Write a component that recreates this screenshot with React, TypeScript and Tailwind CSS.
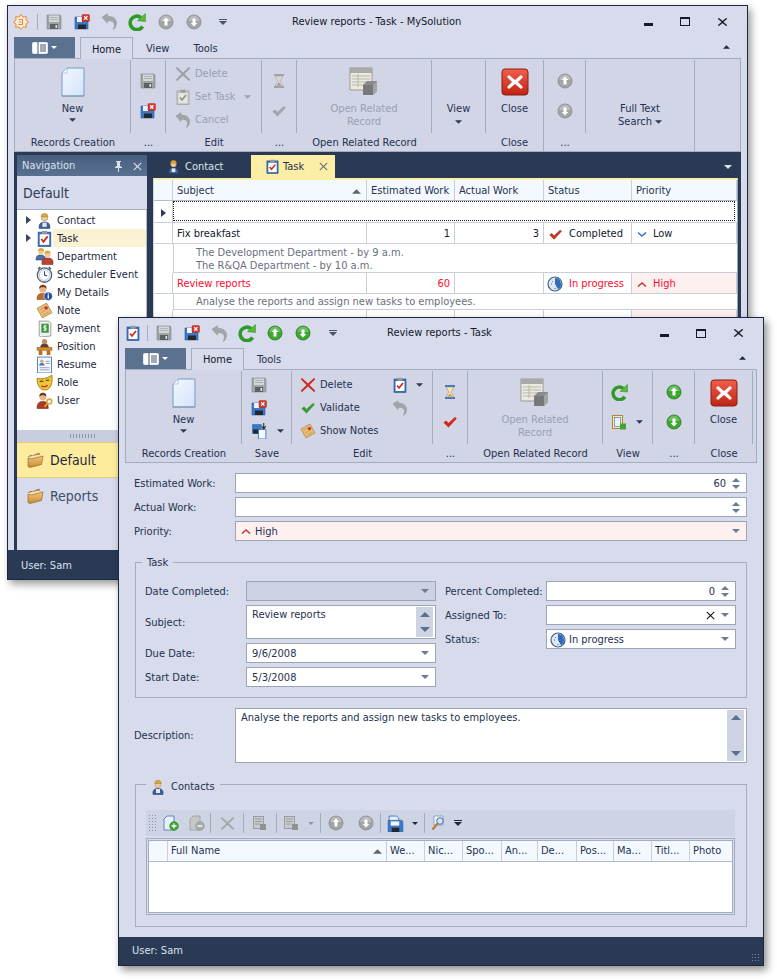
import React from "react";

type P = { s?: number };
const Svg = ({ s = 16, children }: { s?: number; children: React.ReactNode }) => (
  <svg width={s} height={s} viewBox="0 0 16 16" className="block shrink-0">{children}</svg>
);

const Floppy = ({ s = 16, blue = false }: P & { blue?: boolean }) => (
  <Svg s={s}>
    <path d="M1 1h13l1 1v13H1z" fill={blue ? "#3b78c9" : "#9ea3a8"} stroke={blue ? "#2a5c9e" : "#85898e"} strokeWidth=".6" />
    <rect x="3" y="1.500" width="10" height="6.500" fill={blue ? "#f3f6fb" : "#d4d6d8"} />
    <path d="M4 3.500h8M4 5.500h8" stroke={blue ? "#9bb6d9" : "#a8abae"} strokeWidth=".8" />
    <rect x="4" y="10" width="8" height="5" fill={blue ? "#23282f" : "#5d6065"} />
    <rect x="9.500" y="11" width="1.600" height="3" fill="#e5e5e5" />
  </Svg>
);
const FloppyX = ({ s = 16 }: P) => (
  <Svg s={s}>
    <path d="M1 3h11l2 1v11H1z" fill="#3b78c9" stroke="#2a5c9e" strokeWidth=".6" />
    <rect x="3" y="3" width="5" height="5" fill="#eef3fa" />
    <rect x="4" y="10.500" width="8" height="4.500" fill="#23282f" />
    <rect x="8" y="0.500" width="7.500" height="7" rx="1" fill="#d8352a" stroke="#a32018" strokeWidth=".4" />
    <path d="M10.200 2.200l3.200 3.400M13.400 2.200l-3.200 3.400" stroke="#fff" strokeWidth="1.300" />
  </Svg>
);
const Undo = ({ s = 17 }: P) => (
  <Svg s={s}>
    <path d="M1 4L6 .8v2.400c4.500-.2 8.500 1.600 8.500 6.300 0 2.800-1.300 5.200-3 6 1-1.800 1.300-3.600 1-5.200C12 8 9.300 7 6 7.200v2.300z" fill="#a3a5a8" stroke="#8a8c8f" strokeWidth=".5" />
  </Svg>
);
const Refresh = ({ s = 18 }: P) => (
  <Svg s={s}>
    <path d="M13 12a6 6 0 1 1-1.500-8" fill="none" stroke="#2f9a2a" strokeWidth="3.200" />
    <path d="M8.500 6.800L15.500 7.500V.5z" fill="#57bd38" stroke="#2b8b27" strokeWidth=".5" />
  </Svg>
);
const Round = ({ s = 16, up = true, green = false }: P & { up?: boolean; green?: boolean }) => (
  <Svg s={s}>
    <circle cx="8" cy="8" r="7" fill={green ? "#3da82e" : "#a2a5a6"} stroke={green ? "#22761e" : "#85888a"} strokeWidth=".8" />
    <path d="M2.500 7a5.500 5.500 0 0 1 11 0z" fill="#fff" opacity=".25" />
    <path d={up ? "M8 3.500l3.300 3.500H9.500v4.500h-3V7H4.700z" : "M8 12.500L4.700 9H6.500V4.500h3V9h1.800z"} fill="#fff" />
  </Svg>
);
const Caret = ({ c = "#2c3a55", w = 7 }: { c?: string; w?: number }) => (
  <svg width={w} height={Math.ceil(w / 2)} viewBox="0 0 8 4" className="block shrink-0"><path d="M0 0h8L4 4z" fill={c} /></svg>
);
const CaretUp = ({ c = "#2c3a55", w = 7 }: { c?: string; w?: number }) => (
  <svg width={w} height={Math.ceil(w / 2)} viewBox="0 0 8 4" className="block shrink-0"><path d="M0 4h8L4 0z" fill={c} /></svg>
);
const QuickCaret = ({ c = "#4a5568" }: { c?: string }) => (
  <svg width="8" height="6" viewBox="0 0 8 6" className="block"><path d="M0 0h8v1H0z M0 2h8L4 6z" fill={c} /></svg>
);
const NewPage = () => (
  <svg width="28" height="32" viewBox="0 0 28 32" className="block">
    <path d="M8 2h17v28H3V7z" fill="url(#pg)" stroke="#6e9bd1" strokeWidth="1" />
    <path d="M8 2v5H3z" fill="#fff" stroke="#8db0da" strokeWidth=".7" />
    <path d="M3 30h22" stroke="#8796aa" strokeWidth="1" />
    <defs><linearGradient id="pg" x1="0" y1="0" x2="1" y2="1"><stop offset="0" stopColor="#f4f8ff" /><stop offset="1" stopColor="#d3e3fa" /></linearGradient></defs>
  </svg>
);
const BigClose = () => (
  <svg width="28" height="28" viewBox="0 0 28 28" className="block">
    <rect x="1" y="1" width="26" height="26" rx="3" fill="url(#rx)" stroke="#8d1d12" />
    <path d="M8 7l6 5 6-5 2 2-5 5 5 5-2 2-6-5-6 5-2-2 5-5-5-5z" fill="#fff" />
    <defs><linearGradient id="rx" x1="0" y1="0" x2="0" y2="1"><stop offset="0" stopColor="#f0604c" /><stop offset="1" stopColor="#bf2413" /></linearGradient></defs>
  </svg>
);
const RelatedRecord = () => (
  <svg width="30" height="30" viewBox="0 0 30 30" className="block">
    <rect x="1" y="1" width="22" height="22" fill="#eceadf" stroke="#9a9a96" />
    <rect x="1" y="1" width="22" height="5" fill="#a9aaa8" />
    <path d="M3 9h18M3 12h18M3 15h18M3 18h12M9 7v13" stroke="#b8b7ac" strokeWidth="1" />
    <path d="M14 18l4-4h10v10l-4 4H14z" fill="#8a8b8c" />
    <path d="M14 18h10v10H14z" fill="#77787a" />
    <path d="M24 18l4-4v10l-4 4z" fill="#a3a4a5" />
  </svg>
);
const Hourglass = ({ color = false }: { color?: boolean }) => (
  <Svg>
    <path d="M3 1h10v2H3zM3 13h10v2H3z" fill={color ? "#3d7cc4" : "#a1a3a5"} />
    <path d="M4.500 3h7c0 3-2.500 3.800-2.500 5s2.500 2 2.500 5h-7c0-3 2.500-3.800 2.500-5S4.500 6 4.500 3z" fill={color ? "#f4e6c3" : "#d9d8d3"} stroke={color ? "#a88a55" : "#a1a3a5"} strokeWidth=".6" />
    <path d="M5.500 12.500L8 9.500l2.500 3z" fill={color ? "#d49a3a" : "#9a9a96"} />
  </Svg>
);
const Check = ({ c = "#a3a5a8", s = 16 }: P & { c?: string }) => (
  <Svg s={s}>
    <path d="M1.500 8.500L4 6.500l2.500 2.500L13 3l1.800 1.500L6.500 13.500z" fill={c} />
  </Svg>
);
const BigX = ({ c = "#9ca0a4", s = 16 }: P & { c?: string }) => (
  <Svg s={s}>
    <path d="M2 1l6 5.500L14 1l1.300 1.300L9.500 8l5.800 5.700L14 15 8 9.500 2 15 .7 13.700 6.500 8 .7 2.300z" fill={c} />
  </Svg>
);
const Clipboard = ({ s = 16, gray = false }: P & { gray?: boolean }) => (
  <Svg s={s}>
    <rect x="2" y="2" width="12" height="13.500" fill={gray ? "#c8c9c5" : "#3a6fb5"} stroke={gray ? "#8f9193" : "#29538c"} strokeWidth=".6" />
    <rect x="3.500" y="4" width="9" height="10" fill={gray ? "#e6e6e0" : "#fff"} />
    <rect x="5.500" y=".8" width="5" height="3" fill={gray ? "#9a9c9e" : "#8e9bab"} />
    <path d="M5 8.500l2 2.500 4-5" fill="none" stroke={gray ? "#8f9193" : "#d22a1e"} strokeWidth="1.700" />
  </Svg>
);
const Person = ({ s = 16, body = "#3a5f9a", hat = "#d9a93a" }: P & { body?: string; hat?: string }) => (
  <Svg s={s}>
    <path d="M3 15.500c-.6-4 1.200-6 5-6s5.600 2 5 6z" fill={body} stroke="#22395f" strokeWidth=".5" />
    <rect x="6" y="10" width="4" height="4" fill="#dfe7f2" />
    <circle cx="8" cy="5.500" r="3" fill="#f0c9a0" stroke="#9c7348" strokeWidth=".4" />
    <path d="M4.800 4.500a3.200 3.200 0 0 1 6.400 0z" fill={hat} stroke="#8c6b1e" strokeWidth=".4" />
  </Svg>
);
const Department = () => (
  <svg width="20" height="18" viewBox="0 0 20 18" className="block shrink-0">
    <path d="M1 13c0-4 1.500-5 4.500-5s5 1 5 5z" fill="#4c6ea6" stroke="#22395f" strokeWidth=".5" />
    <circle cx="6" cy="5" r="2.800" fill="#f0c9a0" /><path d="M3 4a3 3 0 0 1 6 0z" fill="#d9a93a" />
    <path d="M7 17.500c-.5-5 1-6.500 5.500-6.500s6 1.500 5.500 6.500z" fill="#b8452f" stroke="#6e2417" strokeWidth=".5" />
    <circle cx="12.500" cy="7.500" r="3" fill="#f0c9a0" /><path d="M9.500 6.500a3 3 0 0 1 6 0z" fill="#d9a93a" />
  </svg>
);
const Clock = () => (
  <Svg s={17}>
    <circle cx="8" cy="8.500" r="6.800" fill="#dfe8f2" stroke="#55606e" strokeWidth="1.200" />
    <circle cx="8" cy="8.500" r="4.800" fill="#fff" stroke="#9fb0c6" strokeWidth=".5" />
    <path d="M8 5v3.500l2.500 1" fill="none" stroke="#2c4c85" strokeWidth="1" />
    <path d="M2 3l2-2M14 3l-2-2" stroke="#55606e" strokeWidth="1.500" />
  </Svg>
);
const MyDetails = () => (
  <Svg s={17}>
    <path d="M1 14.500c0-4 1.500-5.500 5-5.500s5 1.500 5 5.500z" fill="#c06a28" stroke="#6d3a12" strokeWidth=".5" />
    <circle cx="6.500" cy="5" r="3.300" fill="#e8b58a" />
    <path d="M3 4.500C3 1.500 5 .8 6.500 .8S10 1.500 10 4.500L8 3H5z" fill="#7a3e1c" />
    <circle cx="11.500" cy="11.500" r="4" fill="#1f4fa5" stroke="#fff" strokeWidth=".6" />
    <rect x="10.900" y="10.500" width="1.300" height="3.300" fill="#fff" /><rect x="10.900" y="8.700" width="1.300" height="1.200" fill="#fff" />
  </Svg>
);
const Note = ({ s = 16 }: P) => (
  <Svg s={s}>
    <path d="M1 6l9-5 5 9-9 5z" fill="#e6bd7a" stroke="#a97f3c" strokeWidth=".7" />
    <path d="M3.500 7.500l6-3.300M5 10l6-3.300M6.500 12.500l6-3.300" stroke="#bf9451" strokeWidth=".7" />
    <circle cx="9.500" cy="5.500" r="1.600" fill="#d22a1e" />
  </Svg>
);
const Payment = () => (
  <Svg s={17}>
    <path d="M3 1h9l2 2v12l-9 1-2-1z" fill="#eef0f0" stroke="#7d8388" strokeWidth=".7" />
    <rect x="5" y="3.500" width="7" height="8.500" fill="#3a9a3a" />
    <path d="M10 5.500H7.500v2h2v2H7M8.500 4.500v6" fill="none" stroke="#fff" strokeWidth=".8" />
  </Svg>
);
const Position = () => (
  <Svg s={17}>
    <circle cx="8" cy="3.500" r="2.500" fill="#c98f5a" />
    <path d="M4 9c0-2.500 1.500-3.500 4-3.500S12 6.500 12 9z" fill="#5c4030" />
    <rect x="1" y="9" width="14" height="2.500" fill="#d98a2b" stroke="#8a5415" strokeWidth=".5" />
    <path d="M2.500 11.500H6V16H2.500zM10 11.500h3.500V16H10z" fill="#b56f1e" />
  </Svg>
);
const Resume = () => (
  <Svg s={17}>
    <rect x="1.500" y="1" width="13" height="15" fill="#f5f8fc" stroke="#3a6fb5" strokeWidth=".8" />
    <circle cx="5.500" cy="5" r="1.700" fill="#d9a77c" /><path d="M3 9c0-1.500 1-2.300 2.500-2.300S8 7.500 8 9z" fill="#3a6fb5" />
    <path d="M9 5h4M9 7h4M3.500 11h9M3.500 13h9" stroke="#7f97b8" strokeWidth=".8" />
  </Svg>
);
const Role = () => (
  <Svg s={17}>
    <path d="M1 4c4 1 9 .5 14-3 .8 6 0 13-6 14C4 16 .8 10 1 4z" fill="#f0c534" stroke="#8a6a14" strokeWidth=".7" />
    <path d="M3.500 7.500c1-1 2.500-1 3.500 0M9.500 6.500c1-1 2-1 3 -.5" fill="none" stroke="#4a3a10" strokeWidth="1" />
    <path d="M5 11c2 1.500 4 1.200 6-.5" fill="none" stroke="#b8351e" strokeWidth="1.200" />
  </Svg>
);
const UserI = () => (
  <Svg s={17}>
    <path d="M1 15.500c0-5 2-6.500 5.500-6.500s5 1.500 5 6.500z" fill="#ad3a22" stroke="#5f1d0f" strokeWidth=".5" />
    <circle cx="6.500" cy="4.800" r="3.200" fill="#e8b58a" />
    <path d="M3.200 4.500C3 1.500 5 .7 6.500 .7S10 1.500 9.800 4.500L8 3H5z" fill="#6e3419" />
    <circle cx="12.500" cy="9" r="2.300" fill="none" stroke="#d9a93a" strokeWidth="1.500" />
    <path d="M11 10.500l-3 3.500" stroke="#d9a93a" strokeWidth="1.500" />
  </Svg>
);
const Folder = () => (
  <svg width="17" height="16" viewBox="0 0 17 16" className="block shrink-0">
    <path d="M1 5l3-2 1 1 7-3 1 3z" fill="#b87a30" stroke="#7c5118" strokeWidth=".5" />
    <path d="M1 5l11-2.500 1 .8V7L3 9z" fill="#f5e3b8" />
    <path d="M1 14.500V6l3 1 12-3-1.500 8.500L3 15.500z" fill="url(#fd)" stroke="#8a5c1d" strokeWidth=".6" />
    <defs><linearGradient id="fd" x1="0" y1="0" x2="0" y2="1"><stop offset="0" stopColor="#f3c77a" /><stop offset="1" stopColor="#c98a35" /></linearGradient></defs>
  </svg>
);
const Gear = () => (
  <svg width="16" height="16" viewBox="0 0 16 16" className="block shrink-0">
    <path d="M8 .5L10 3.100 13.300 2.700 12.900 6 15.500 8 12.900 10 13.300 13.300 10 12.900 8 15.500 6 12.900 2.700 13.300 3.100 10 .5 8 3.100 6 2.700 2.700 6 3.100z" fill="#fdeedd" stroke="#ee8a2c" strokeWidth="1" />
    <path d="M5.500 5.500h4v5h-4M5.500 8h3" fill="none" stroke="#ee8a2c" strokeWidth="1" />
  </svg>
);
const PanelIcon = () => (
  <svg width="16" height="12" viewBox="0 0 16 12" className="block">
    <rect x=".5" y=".5" width="15" height="11" rx="1" fill="#fff" stroke="#e6ebf2" />
    <path d="M6 0v12" stroke="#44566f" />
    <path d="M8 3h6M8 5h6M8 7h6M8 9h6" stroke="#44566f" />
  </svg>
);
const ArrowDown = () => (
  <svg width="10" height="7" viewBox="0 0 10 7" className="block shrink-0"><path d="M1 1.500L5 5l4-3.500" fill="none" stroke="#3573c8" strokeWidth="1.500" /></svg>
);
const ArrowUpRed = () => (
  <svg width="10" height="7" viewBox="0 0 10 7" className="block shrink-0"><path d="M1 5.500L5 2l4 3.500" fill="none" stroke="#c2372b" strokeWidth="1.500" /></svg>
);
const InProgress = () => (
  <Svg>
    <circle cx="8" cy="8" r="7" fill="#dfe8f2" stroke="#3e5f8c" strokeWidth="1.200" />
    <path d="M8 8V2a6 6 0 0 1 3 11.200z" fill="#2f6db8" />
    <path d="M4 8h1M8 12v1M5 5l.7.700" stroke="#3e5f8c" strokeWidth="1" />
  </Svg>
);
const Pin = () => (
  <svg width="9" height="11" viewBox="0 0 9 11" className="block"><path d="M2 0h5v1H6v4l2 1v1H5v4H4V7H1V6l2-1V1H2z" fill="#dbe2ee" /></svg>
);
const ViewDoc = () => (
  <Svg>
    <rect x="1.500" y="1.500" width="10" height="13" fill="#f7e7b5" stroke="#a88a3a" />
    <rect x="3.500" y="3.500" width="6" height="9" fill="#eaf1fb" stroke="#3a6fb5" strokeWidth=".6" />
    <rect x="9" y="9.500" width="6" height="6" fill="#3da82e" />
  </Svg>
);
const CopySave = () => (
  <Svg s={17}>
    <path d="M1 2h9v9H1z" fill="#3b78c9" />
    <rect x="2" y="7" width="7" height="4" fill="#23282f" />
    <path d="M7 7h7v9H7z" fill="#f6f9fd" stroke="#3a6fb5" strokeWidth=".8" />
    <path d="M12 1v5M10 4l2 2.500L14 4" fill="none" stroke="#222" strokeWidth="1" />
  </Svg>
);
const SavePage = () => (
  <Svg s={17}>
    <path d="M2 1h7l2 2v5H2z" fill="#e8f0fc" stroke="#3a6fb5" strokeWidth=".8" />
    <path d="M1 5h13l1 1v10H1z" fill="#3b78c9" stroke="#2a5c9e" strokeWidth=".5" />
    <rect x="3.500" y="6" width="8" height="4" fill="#f3f6fb" />
    <rect x="4.500" y="12" width="7" height="4" fill="#23282f" />
  </Svg>
);
const AddPage = ({ gray = false, minus = false }: { gray?: boolean; minus?: boolean }) => (
  <Svg>
    <path d="M4 1h7v14H1V4z" fill={gray ? "#c6c8c8" : "#e8f0fc"} stroke={gray ? "#9a9c9e" : "#3a6fb5"} strokeWidth=".8" />
    <circle cx="11" cy="11" r="4.300" fill={gray ? "#a8aaab" : "#3da82e"} stroke={gray ? "#8a8c8e" : "#22761e"} strokeWidth=".6" />
    <path d={minus ? "M8.500 11h5" : "M8.500 11h5M11 8.500v5"} stroke="#fff" strokeWidth="1.300" />
  </Svg>
);
const Find = () => (
  <Svg>
    <path d="M3 1h9v9H3z" fill="#f4f7fb" stroke="#6a8ab5" strokeWidth=".7" />
    <circle cx="9" cy="6" r="3.300" fill="#cfe3f8" stroke="#4a6e9c" strokeWidth="1" />
    <path d="M6.500 8.500L1.500 14.500" stroke="#b8772a" strokeWidth="2" />
  </Svg>
);
const DocGray = ({ withCube = false }: { withCube?: boolean }) => (
  <Svg>
    <rect x="1.500" y="1.500" width="10" height="12" fill="#c8cacb" stroke="#9a9c9e" />
    <path d="M3 4h7M3 6.500h7M3 9h5" stroke="#9a9c9e" />
    <rect x={withCube ? 9 : 8} y="9" width="6" height="6" fill="#8f9193" />
  </Svg>
);

const WinControls = () => (
  <div className="ml-auto flex items-center">
    <div className="w-[9px] h-[3px] bg-[#111827] mt-[5px]" />
    <div className="ml-[27px] w-[10px] h-[9px] border border-[#111827] border-t-2" />
    <div className="ml-[28px] mr-[20px]">
      <svg width="9" height="8" viewBox="0 0 9 8" className="block"><path d="M.5 0l4 3 4-3 .5.700L5.200 4 9 7.300 8.500 8l-4-3-4 3L0 7.300 3.800 4 0 .700z" fill="#111827" stroke="#111827" strokeWidth=".4" /></svg>
    </div>
  </div>
);

const RibbonGroup = ({ w, cap, full, last, children, disabled }: { w: number; cap: string; full?: boolean; last?: boolean; children?: React.ReactNode; disabled?: boolean }) => (
  <div className={`relative shrink-0 flex flex-col h-full ${full ? "border-r border-[#a3adbe]" : ""}`} style={{ width: w }}>
    <div className={`h-[73px] flex items-start justify-center ${!full && !last ? "border-r border-[#a3adbe]" : ""} ${disabled ? "text-[#98a1b4]" : ""}`}>{children}</div>
    <div className="flex-1 flex items-center justify-center pt-[2px] text-[#24314f] whitespace-nowrap">{cap}</div>
  </div>
);
const BigBtn = ({ icon, text, caret, disabled }: { icon: React.ReactNode; text?: React.ReactNode; caret?: boolean; disabled?: boolean }) => (
  <div className={`flex flex-col items-center leading-[13px] text-center pt-[4px] ${disabled ? "text-[#98a1b4]" : "text-[#24314f]"}`}>
    <div className="flex items-center justify-center h-[36px]">{icon}</div>
    <div className="mt-[2px]">{text}</div>
    {caret && <div className="mt-[3px]"><Caret /></div>}
  </div>
);
const SmallRow = ({ icon, text, caret, disabled }: { icon: React.ReactNode; text: string; caret?: boolean; disabled?: boolean }) => (
  <div className={`h-[23px] flex items-center whitespace-nowrap ${disabled ? "text-[#98a1b4]" : "text-[#24314f]"}`}>
    <div className="w-[16px] flex justify-center">{icon}</div>
    <span className="ml-[4px]">{text}</span>
    {caret && <span className="ml-[8px]"><Caret c="#98a1b4" /></span>}
  </div>
);
const IconStack = ({ children }: { children: React.ReactNode }) => (
  <div className="flex flex-col items-center gap-[14px] pt-[13px]">{children}</div>
);

const QA = ({ children, w }: { children: React.ReactNode; w: number }) => (
  <div className="flex items-center justify-center shrink-0" style={{ width: w }}>{children}</div>
);

const Window1Grid = () => {
  const cols = "grid grid-cols-[19px_194px_88px_89px_88px_1fr]";
  const line = "border-r border-[#c9cedb]";
  const Cell = ({ children, right, className = "" }: { children?: React.ReactNode; right?: boolean; className?: string }) => (
    <div className={`flex items-center px-[4px] pt-[2px] whitespace-nowrap ${line} ${right ? "justify-end" : ""} ${className}`}>{children}</div>
  );
  return (
    <div className="flex-1 border-t-2 border-[#fdeea5] bg-[#fff] overflow-hidden border-l border-r border-l-[#cfd4d8] border-r-[#9aa5b8]">
      <div className={`${cols} h-[21px] bg-[#f4f9ff] text-[#24314f] border-b border-[#b4bccb]`}>
        <Cell />
        <Cell className="justify-between"><span>Subject</span><span className="mr-[1px]"><CaretUp c="#5d6470" w={9} /></span></Cell>
        <Cell>Estimated Work</Cell>
        <Cell>Actual Work</Cell>
        <Cell>Status</Cell>
        <Cell>Priority</Cell>
      </div>
      <div className={`${cols} h-[22px] border-b border-[#c9cedb]`}>
        <Cell className="justify-center !px-0"><svg width="5" height="8" viewBox="0 0 5 8"><path d="M0 0l5 4-5 4z" fill="#2c3a55" /></svg></Cell>
        <div className="col-span-5 border border-dotted border-[#222] h-[20px] mr-[2px]" />
      </div>
      <div className={`${cols} h-[21px] border-b border-[#c9cedb] text-[#14192b]`}>
        <div className="border-r border-[#c9cedb]" />
        <Cell>Fix breakfast</Cell>
        <Cell right>1</Cell>
        <Cell right>3</Cell>
        <Cell className="gap-[6px]"><Check c="#c2352a" s={15} /><span>Completed</span></Cell>
        <Cell className="gap-[6px] !pl-[5px]"><ArrowDown /><span>Low</span></Cell>
      </div>
      <div className="h-[29px] ml-[19px] pl-[22px] pt-[2px] border-l border-b border-[#c9cedb] text-[#6a7080] leading-[13px] flex flex-col justify-center">
        <div>The Development Department - by 9 a.m.</div>
        <div>The R&amp;QA Department - by 10 a.m.</div>
      </div>
      <div className={`${cols} h-[21px] border-b border-[#c9cedb] text-[#ff0a2d]`}>
        <div className="border-r border-[#c9cedb]" />
        <Cell>Review reports</Cell>
        <Cell right>60</Cell>
        <Cell />
        <Cell className="gap-[6px] !pl-[3px]"><InProgress /><span>In progress</span></Cell>
        <Cell className="gap-[6px] !pl-[5px] bg-[#fff0f0]"><ArrowUpRed /><span>High</span></Cell>
      </div>
      <div className="h-[16px] ml-[19px] pl-[22px] border-l border-b border-[#c9cedb] text-[#6a7080] flex items-center whitespace-nowrap">
        Analyse the reports and assign new tasks to employees.
      </div>
      <div className={`${cols} h-[20px]`}>
        <div className="border-r border-[#c9cedb]" /><Cell /><Cell /><Cell /><Cell /><Cell className="bg-[#fff0f0]" />
      </div>
    </div>
  );
};

const navItems: [React.ReactNode, string, boolean][] = [
  [<Person s={17} />, "Contact", true],
  [<Clipboard s={17} />, "Task", true],
  [<Department />, "Department", false],
  [<Clock />, "Scheduler Event", false],
  [<MyDetails />, "My Details", false],
  [<Note s={17} />, "Note", false],
  [<Payment />, "Payment", false],
  [<Position />, "Position", false],
  [<Resume />, "Resume", false],
  [<Role />, "Role", false],
  [<UserI />, "User", false],
];

const Nav = () => (
  <div className="w-[130px] shrink-0 flex flex-col bg-[#d7dbeb]">
    <div className="h-[21px] bg-gradient-to-b from-[#4a5f80] to-[#597090] flex items-center pl-[5px] pt-[1px] text-[#dbe2ee]">
      <span>Navigation</span>
      <span className="ml-auto"><Pin /></span>
      <span className="ml-[10px] mr-[5px]"><BigX c="#dbe2ee" s={9} /></span>
    </div>
    <div className="h-[34px] flex items-center pl-[6px] text-[14px] text-[#2a3a55] border-b border-[#a3adbe]">Default</div>
    <div className="h-[220px] bg-white pt-[1px] border-r border-[#b4bccb]">
      {navItems.map(([icon, label, arrow], i) => (
        <div key={label} className="h-[18px] flex items-center text-[#1c2740]">
          <div className="w-[14px] flex justify-end shrink-0">
            {arrow && <svg width="5" height="8" viewBox="0 0 5 8"><path d="M0 0l5 4-5 4z" fill="#3a4660" /></svg>}
          </div>
          <div className="w-[17px] ml-[5px] flex justify-center shrink-0">{icon}</div>
          <div className={`flex-1 h-full flex items-center pl-[4px] pt-[1px] ${i === 1 ? "bg-[#fbf2d4]" : ""}`}>{label}</div>
        </div>
      ))}
    </div>
    <div className="h-[12px] bg-[#c8cede] flex items-center justify-center">
      <div className="w-[26px] h-[4px] bg-[radial-gradient(#8993a6_35%,transparent_40%)] bg-[length:3px_2px]" />
    </div>
    <div className="h-[36px] bg-[#fdec9e] border-y border-[#e6cc79] flex items-center pl-[10px] gap-[6px] text-[14px] text-[#1c2740]"><Folder /><span>Default</span></div>
    <div className="h-[36px] flex items-center pl-[10px] gap-[6px] text-[14px] text-[#3f4d69]"><Folder /><span>Reports</span></div>
  </div>
);

const Window1 = () => (
  <div className="absolute left-[7px] top-[5px] w-[741px] h-[575px] border border-[#1a2940] bg-[#d7dbeb] flex flex-col shadow-[3px_4px_8px_rgba(0,0,0,0.4)]">
    <div className="h-[31px] flex items-center shrink-0 pl-[5px]">
      <QA w={16}><Gear /></QA>
      <div className="w-[1px] h-[16px] bg-[#a3adbe] ml-[8px]" />
      <QA w={32}><Floppy /></QA>
      <QA w={24}><FloppyX /></QA>
      <QA w={30}><Undo /></QA>
      <QA w={26}><Refresh /></QA>
      <QA w={31}><Round /></QA>
      <QA w={25}><Round up={false} /></QA>
      <QA w={34}><QuickCaret /></QA>
      <span className="ml-[52px] text-[#14192b] whitespace-nowrap">Review reports - Task - MySolution</span>
      <WinControls />
    </div>
    <div className="h-[21px] mx-[6px] flex items-end shrink-0 text-[#24314f]">
      <div className="w-[61px] h-[21px] bg-[#5a7190] flex items-center justify-center gap-[3px]"><PanelIcon /><Caret c="#fff" w={6} /></div>
      <div className="ml-[5px] w-[53px] h-[22px] bg-[#d7dbeb] border border-b-0 border-[#a3adbe] flex items-center justify-center pt-[2px] text-[#14192b] relative top-[1px] z-10">Home</div>
      <span className="ml-[13px] h-[21px] pt-[3px] flex items-center">View</span>
      <span className="ml-[24px] h-[21px] pt-[3px] flex items-center">Tools</span>
      <span className="ml-auto mr-[11px] mb-[9px]"><CaretUp c="#1c2740" w={7} /></span>
    </div>
    <div className="h-[94px] mx-[6px] shrink-0 flex border border-[#a3adbe] bg-[#d1d5e6] pt-[1px]">
      <RibbonGroup w={116} cap="Records Creation"><BigBtn icon={<NewPage />} text="New" caret /></RibbonGroup>
      <RibbonGroup w={35} cap="..."><IconStack><Floppy /><FloppyX /></IconStack></RibbonGroup>
      <RibbonGroup w={96} cap="Edit">
        <div className="pt-[2px] mr-auto ml-[9px]">
          <SmallRow disabled icon={<BigX />} text="Delete" />
          <SmallRow disabled icon={<Clipboard gray />} text="Set Task" caret />
          <SmallRow disabled icon={<Undo s={16} />} text="Cancel" />
        </div>
      </RibbonGroup>
      <RibbonGroup w={35} cap="..."><IconStack><Hourglass /><Check /></IconStack></RibbonGroup>
      <RibbonGroup w={135} cap="Open Related Record"><BigBtn disabled icon={<RelatedRecord />} text={<>Open Related<br />Record</>} /></RibbonGroup>
      <RibbonGroup w={54} cap=""><div className="pt-[42px] flex flex-col items-center text-[#24314f] gap-[5px]"><span className="leading-[13px]">View</span><Caret /></div></RibbonGroup>
      <RibbonGroup w={58} cap="Close" full><BigBtn icon={<BigClose />} text="Close" /></RibbonGroup>
      <RibbonGroup w={42} cap="..."><IconStack><Round /><Round up={false} /></IconStack></RibbonGroup>
      <RibbonGroup w={109} cap="" full><div className="pt-[42px] text-[#24314f] leading-[13px] text-center"><div>Full Text</div><div className="flex items-center gap-[3px]">Search <Caret /></div></div></RibbonGroup>
      <div className="flex-1" />
    </div>
    <div className="flex-1 min-h-0 mx-[6px] bg-[#2a3a55] flex gap-[6px] pl-[3px] pr-[3px] pt-[3px]">
      <Nav />
      <div className="flex-1 min-w-0 flex flex-col">
        <div className="h-[23px] flex shrink-0 items-center">
          <div className="pl-[13px] w-[98px] flex items-center gap-[4px] text-[#dbe2ee]"><Person s={15} /><span>Contact</span></div>
          <div className="w-[84px] h-full bg-[#fdeea5] flex items-center pl-[14px] text-[#24314f]">
            <Clipboard s={15} /><span className="ml-[3px]">Task</span><span className="ml-[15px]"><BigX c="#6a7080" s={9} /></span>
          </div>
          <span className="ml-auto mr-[6px]"><Caret c="#dbe2ee" w={8} /></span>
        </div>
        <Window1Grid />
      </div>
    </div>
    <div className="h-[29px] shrink-0 bg-[#2a3a55] flex items-center pl-[13px] pt-[2px] text-[#dbe2ee]">User: Sam</div>
  </div>
);

const Spin = () => (
  <div className="flex flex-col gap-[3px] mr-[1px] ml-[6px]"><CaretUp c="#6c7a92" w={8} /><Caret c="#6c7a92" w={8} /></div>
);
const Scroll = () => (
  <div className="self-stretch my-[1px] -mr-[3px] w-[17px] bg-[#cfd4e4] flex flex-col justify-between items-center py-[5px] shrink-0"><CaretUp c="#5c6f8c" w={10} /><Caret c="#5c6f8c" w={10} /></div>
);
const Field = ({ w, children, right, className = "", h = 20, top = false }: { w?: number; children?: React.ReactNode; right?: React.ReactNode; className?: string; h?: number; top?: boolean }) => (
  <div className={`border border-[#9aa5b8] flex items-center px-[5px] text-[#24314f] shrink-0 ${className || "bg-white"}`} style={{ width: w, height: h }}>
    <div className={`flex-1 min-w-0 flex whitespace-nowrap ${top ? "self-start pt-[2px]" : "items-center pt-[1px]"}`}>{children}</div>
    {right}
  </div>
);
const DD = ({ c = "#6c7a92" }: { c?: string }) => <span className="mr-[1px] ml-[6px]"><Caret c={c} w={8} /></span>;
const Label = ({ children, w }: { children: React.ReactNode; w: number }) => (
  <div className="shrink-0 text-[#24314f] whitespace-nowrap pt-[1px]" style={{ width: w }}>{children}</div>
);
const Row = ({ children }: { children: React.ReactNode }) => <div className="flex items-center">{children}</div>;

const TbSep = () => <div className="w-[1px] h-[20px] bg-[#a3adbe] shrink-0" />;
const Tb = ({ w, children }: { w: number; children: React.ReactNode }) => (
  <div className="flex items-center justify-center shrink-0" style={{ width: w }}>{children}</div>
);

const Window2 = () => (
  <div className="absolute left-[118px] top-[317px] w-[646px] h-[649px] border border-[#1a2940] bg-[#d7dbeb] flex flex-col shadow-[3px_4px_8px_rgba(0,0,0,0.45)]">
    <div className="h-[30px] flex items-center shrink-0 pl-[6px]">
      <QA w={16}><Clipboard /></QA>
      <div className="w-[1px] h-[16px] bg-[#a3adbe] ml-[6px]" />
      <QA w={32}><Floppy /></QA>
      <QA w={24}><FloppyX /></QA>
      <QA w={30}><Undo /></QA>
      <QA w={26}><Refresh /></QA>
      <QA w={30}><Round green /></QA>
      <QA w={26}><Round green up={false} /></QA>
      <QA w={34}><QuickCaret /></QA>
      <span className="ml-[37px] text-[#14192b] whitespace-nowrap">Review reports - Task</span>
      <WinControls />
    </div>
    <div className="h-[21px] mx-[6px] flex items-end shrink-0 text-[#24314f]">
      <div className="w-[61px] h-[21px] bg-[#5a7190] flex items-center justify-center gap-[3px]"><PanelIcon /><Caret c="#fff" w={6} /></div>
      <div className="ml-[5px] w-[53px] h-[22px] bg-[#d7dbeb] border border-b-0 border-[#a3adbe] flex items-center justify-center pt-[1px] text-[#14192b] relative top-[1px] z-10">Home</div>
      <span className="ml-[13px] h-[21px] pt-[3px] flex items-center">Tools</span>
      <span className="ml-auto mr-[11px] mb-[9px]"><CaretUp c="#1c2740" w={7} /></span>
    </div>
    <div className="h-[94px] mx-[6px] shrink-0 flex border border-[#a3adbe] bg-[#d1d5e6] pt-[1px]">
      <RibbonGroup w={116} cap="Records Creation"><BigBtn icon={<NewPage />} text="New" caret /></RibbonGroup>
      <RibbonGroup w={50} cap="Save">
        <div className="flex flex-col pt-[2px] mr-auto ml-[9px]">
          <div className="h-[23px] flex items-center"><Floppy /></div>
          <div className="h-[23px] flex items-center"><FloppyX /></div>
          <div className="h-[23px] flex items-center gap-[9px]"><CopySave /><Caret /></div>
        </div>
      </RibbonGroup>
      <RibbonGroup w={141} cap="Edit">
        <div className="flex pt-[2px] mr-auto ml-[8px]">
          <div>
            <SmallRow icon={<BigX c="#d02a20" />} text="Delete" />
            <SmallRow icon={<Check c="#3f9a35" />} text="Validate" />
            <SmallRow icon={<Note />} text="Show Notes" />
          </div>
          <div className="ml-[14px] flex flex-col">
            <div className="h-[23px] flex items-center gap-[8px]"><Clipboard /><Caret /></div>
            <div className="h-[23px] flex items-center"><Undo s={16} /></div>
          </div>
        </div>
      </RibbonGroup>
      <RibbonGroup w={35} cap="..."><IconStack><Hourglass color /><Check c="#d0281e" /></IconStack></RibbonGroup>
      <RibbonGroup w={135} cap="Open Related Record"><BigBtn disabled icon={<RelatedRecord />} text={<>Open Related<br />Record</>} /></RibbonGroup>
      <RibbonGroup w={50} cap="View">
        <div className="mr-auto ml-[8px] pt-[13px] flex flex-col gap-[13px]">
          <Refresh s={17} />
          <div className="flex items-center gap-[9px]"><ViewDoc /><Caret /></div>
        </div>
      </RibbonGroup>
      <RibbonGroup w={42} cap="..."><IconStack><Round green /><Round green up={false} /></IconStack></RibbonGroup>
      <RibbonGroup w={58} cap="Close"><BigBtn icon={<BigClose />} text="Close" /></RibbonGroup>
      <div className="flex-1" />
    </div>

    <div className="flex-1 min-h-0 flex flex-col pl-[15px] pr-[16px] pt-[10px]">
      <div className="flex flex-col gap-[4px] shrink-0">
        <Row><Label w={101}>Estimated Work:</Label><div className="flex-1 min-w-0"><Field right={<Spin />}><span className="ml-auto">60</span></Field></div></Row>
        <Row><Label w={101}>Actual Work:</Label><div className="flex-1"><Field right={<Spin />} /></div></Row>
        <Row><Label w={101}>Priority:</Label><div className="flex-1"><Field className="bg-[#fff0f0]" right={<DD />}><span className="self-center"><ArrowUpRed /></span><span className="ml-[4px]">High</span></Field></div></Row>
      </div>

      <div className="relative shrink-0 ml-[1px] mt-[21px] h-[136px] border border-[#a3adbe] flex gap-[9px] pl-[9px] pt-[18px]">
        <span className="absolute left-[6px] -top-[7px] bg-[#d7dbeb] px-[5px] text-[#24314f] leading-[13px]">Task</span>
        <div className="flex flex-col gap-[4px]">
          <Row><Label w={101}>Date Completed:</Label><Field w={190} className="bg-[#cdd2e2]" right={<DD />} /></Row>
          <Row>
            <Label w={101}>Subject:</Label>
            <Field w={190} h={34} top right={<Scroll />}>
              <span>Review reports</span>
            </Field>
          </Row>
          <Row><Label w={101}>Due Date:</Label><Field w={190} right={<DD />}>9/6/2008</Field></Row>
          <Row><Label w={101}>Start Date:</Label><Field w={190} right={<DD />}>5/3/2008</Field></Row>
        </div>
        <div className="flex flex-col gap-[4px]">
          <Row><Label w={101}>Percent Completed:</Label><Field w={190} right={<Spin />}><span className="ml-auto">0</span></Field></Row>
          <Row><Label w={101}>Assigned To:</Label><Field w={190} right={<DD />}><span className="ml-auto self-center"><BigX c="#14192b" s={9} /></span></Field></Row>
          <Row><Label w={101}>Status:</Label><Field w={190} right={<DD />}><span className="-ml-[2px] self-center"><InProgress /></span><span className="ml-[3px]">In progress</span></Field></Row>
        </div>
      </div>

      <div className="flex items-center shrink-0 mt-[10px]">
        <Label w={101}>Description:</Label>
        <div className="flex-1"><Field h={55} top right={<Scroll />}><span>Analyse the reports and assign new tasks to employees.</span></Field></div>
      </div>

      <div className="relative shrink-0 ml-[1px] mt-[21px] h-[143px] border border-[#a3adbe] px-[10px] pt-[25px]">
        <span className="absolute left-[10px] -top-[6px] bg-[#d7dbeb] pl-[4px] pr-[5px] flex items-center gap-[5px] text-[#24314f] leading-[16px]"><Person s={16} />Contacts</span>
        <div className="h-[26px] w-[589px] bg-[#cfd4e4] flex items-center">
          <div className="w-[10px] ml-[2px] h-[18px] bg-[radial-gradient(#8993a6_35%,transparent_40%)] bg-[length:3px_3px] shrink-0" />
          <Tb w={26}><AddPage /></Tb>
          <Tb w={26}><AddPage gray minus /></Tb>
          <TbSep />
          <Tb w={32}><BigX c="#a5a8aa" s={15} /></Tb>
          <TbSep />
          <Tb w={32}><DocGray /></Tb>
          <TbSep />
          <Tb w={43}><div className="flex items-center gap-[9px]"><DocGray withCube /><Caret c="#8e97a8" w={6} /></div></Tb>
          <TbSep />
          <Tb w={30}><Round /></Tb>
          <Tb w={29}><Round up={false} /></Tb>
          <TbSep />
          <Tb w={43}><div className="flex items-center gap-[8px]"><SavePage /><Caret c="#1c2740" w={6} /></div></Tb>
          <TbSep />
          <Tb w={28}><Find /></Tb>
          <div className="ml-[1px]"><QuickCaret c="#1c2740" /></div>
        </div>
        <div className="mt-[2px] w-[589px] h-[77px] border border-[#a3adbe] p-[1px]">
          <div className="w-full h-full border border-[#a3adbe] bg-white">
            <div className="h-[21px] bg-[#f4f9ff] border-b border-[#b4bccb] grid grid-cols-[19px_219px_38px_38px_39px_36px_39px_37px_38px_38px_1fr] text-[#24314f] whitespace-nowrap">
              {["", "Full Name", "We...", "Nic...", "Spo...", "An...", "De...", "Pos...", "Ma...", "Titl...", "Photo"].map((t, i) => (
                <div key={i} className={`flex items-center pl-[3px] overflow-hidden ${i < 10 ? "border-r border-[#c9cedb]" : ""} ${i === 1 ? "justify-between pr-[4px]" : ""}`}>
                  <span>{t}</span>
                  {i === 1 && <CaretUp c="#5d6470" w={9} />}
                </div>
              ))}
            </div>
          </div>
        </div>
      </div>
    </div>
    <div className="relative h-[28px] shrink-0 bg-[#2a3a55] flex items-center pl-[13px] text-[#dbe2ee]">
      User: Sam
      <div className="absolute right-[2px] bottom-[2px] w-[10px] h-[10px] bg-[radial-gradient(#7d8aa3_35%,transparent_40%)] bg-[length:3px_3px]" />
    </div>
  </div>
);

export default function App() {
  return (
    <div className="relative w-[777px] h-[980px] bg-white overflow-hidden text-[11px] leading-[14px] font-['DejaVu_Sans_Condensed','DejaVu_Sans',sans-serif]">
      <Window1 />
      <Window2 />
    </div>
  );
}
